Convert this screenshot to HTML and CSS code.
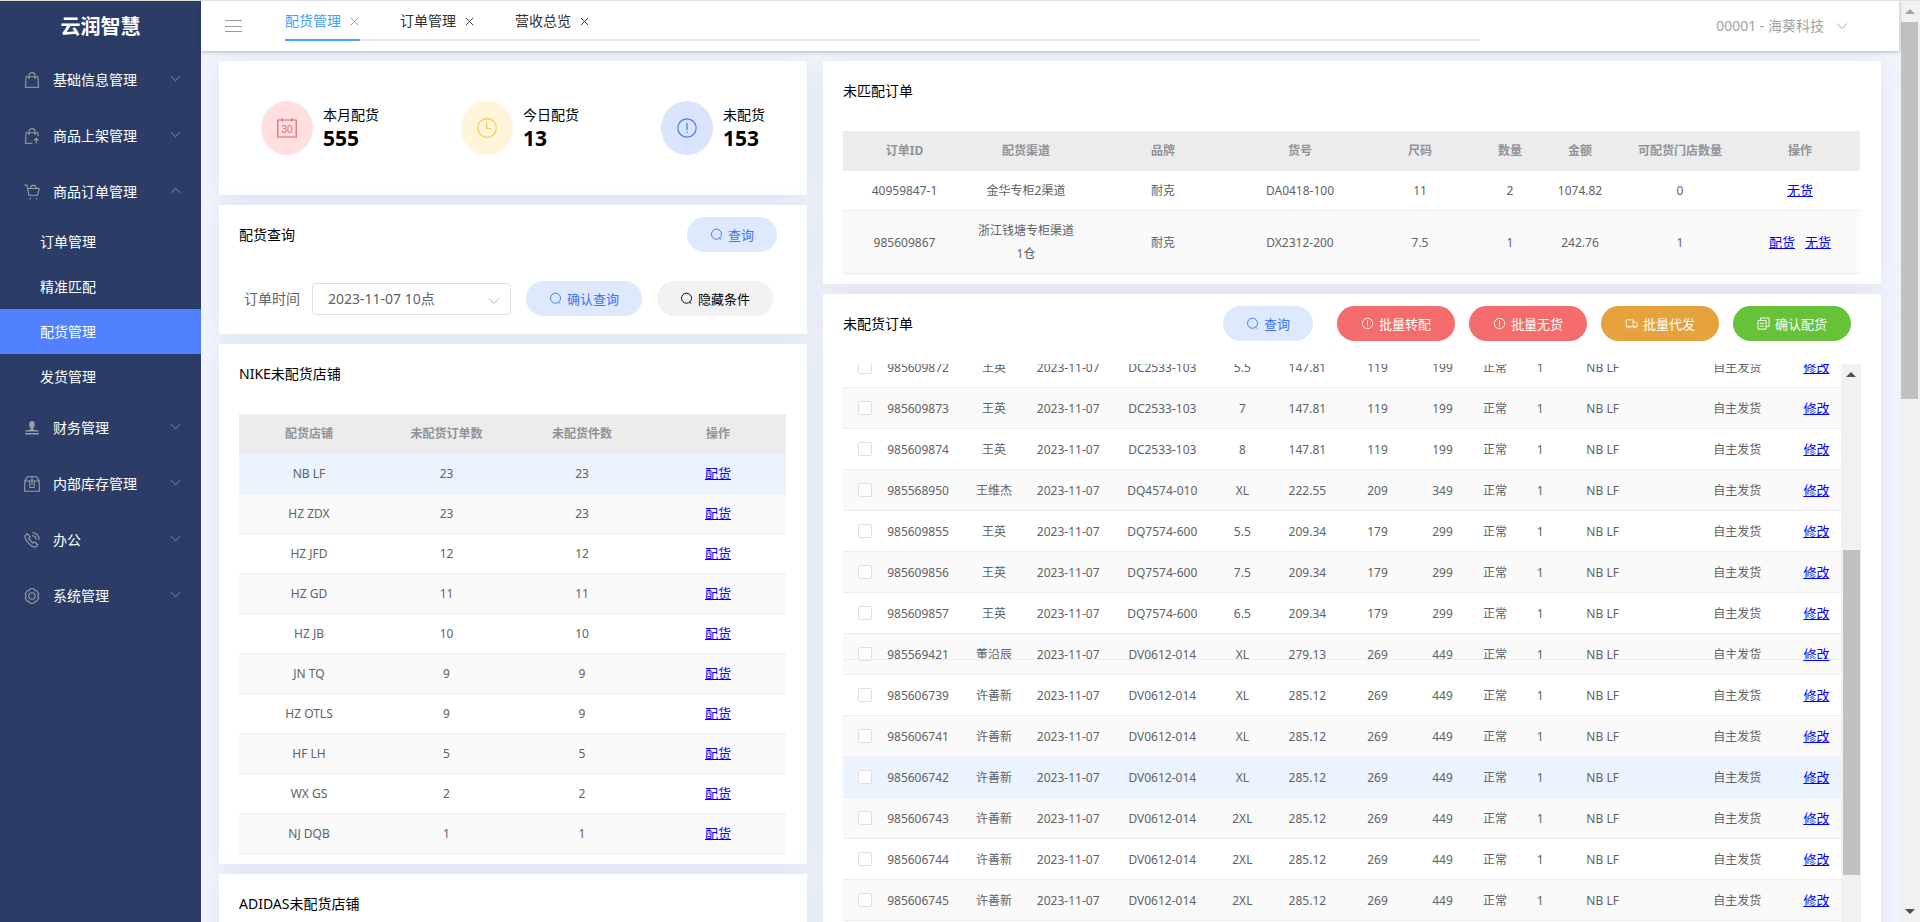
FILE: index.html
```html
<!DOCTYPE html>
<html lang="zh-CN">
<head>
<meta charset="utf-8">
<title>云润智慧 - 配货管理</title>
<link rel="stylesheet" href="styles.css">
</head>
<body>
<svg class="sprite" aria-hidden="true">
  <symbol id="i-down" viewBox="0 0 12 12"><path d="M1 3.5l5 5 5-5"/></symbol>
  <symbol id="i-up" viewBox="0 0 12 12"><path d="M1 8.5l5-5 5 5"/></symbol>
  <symbol id="i-close" viewBox="0 0 12 12"><path d="M2 2l8 8M10 2l-8 8"/></symbol>
  <symbol id="i-search" viewBox="0 0 14 14"><circle cx="7" cy="6.7" r="5.4"/><path d="M10 10.7l2.2 2"/></symbol>
  <symbol id="i-warn" viewBox="0 0 14 14"><circle cx="7" cy="7" r="5.6"/><path d="M7 3.6v4.8M7 9.4v1.2"/></symbol>
</svg>
<div class="app">
  <aside class="sidebar">
    <h1 class="brand">云润智慧</h1>
    <nav class="menu">
      <a class="menu-item" href="#base"><svg class="menu-icon" viewBox="0 0 16 16"><path d="M2.2 4.8h11.6l.8 10.5H1.4zM5 7V3.6a3 3 0 0 1 6 0V7"/></svg><span>基础信息管理</span><svg class="arrow"><use href="#i-down"/></svg></a>
      <a class="menu-item" href="#shelf"><svg class="menu-icon" viewBox="0 0 16 16"><path d="M8.5 15.3H1.4l.8-10.5h11.6l.3 3.4M5 7V3.6a3 3 0 0 1 6 0V7M12.2 15.5v-5M9.8 12.6l2.4-2.4 2.4 2.4"/></svg><span>商品上架管理</span><svg class="arrow"><use href="#i-down"/></svg></a>
      <a class="menu-item" href="#orders"><svg class="menu-icon" viewBox="0 0 16 16"><path d="M.3 1h2.5l2.1 10.3h8.6l1.7-6.8H3.6M6.2 4.3C6.6 2 8 1.2 9.5 1.4s2.6 1.3 2.8 2.9"/><path d="M5.5 14.6h1.4M11.7 14.6h1.4"/></svg><span>商品订单管理</span><svg class="arrow"><use href="#i-up"/></svg></a>
      <div class="submenu">
        <a class="sub-item" href="#order">订单管理</a>
        <a class="sub-item" href="#match">精准匹配</a>
        <a class="sub-item active" href="#alloc">配货管理</a>
        <a class="sub-item" href="#ship">发货管理</a>
      </div>
      <a class="menu-item" href="#finance"><svg class="menu-icon" viewBox="0 0 16 16"><path class="solid" d="M1 11.6c0-1 2.6-1.5 5.6-2 .3-.9 0-1.6-.7-2.6C4.400 4.500 5.300 1 8 1s3.600 3.500 2.100 6c-.7 1-1 1.700-.7 2.600 3 .5 5.600 1 5.600 2zM1 13h14v1.400H1z"/></svg><span>财务管理</span><svg class="arrow"><use href="#i-down"/></svg></a>
      <a class="menu-item" href="#stock"><svg class="menu-icon" viewBox="0 0 16 16"><path d="M.7 5L3.600.8h8.800L15.300 5v10.300H.7zM.7 5h14.600M5.800 5v6.500h4.400V5M8 .8v8"/></svg><span>内部库存管理</span><svg class="arrow"><use href="#i-down"/></svg></a>
      <a class="menu-item" href="#office"><svg class="menu-icon" viewBox="0 0 16 16"><path d="M3.400 1.700L1.200 3.500c-.8 2 .4 4.600 3.600 7.900s5.400 4.300 7.400 3.400l1.600-1.900-3-2.900-1.900 1.100-4.200-4.400 1.300-1.900zM8.300 3.600c2.200.2 3.700 1.700 4 4M8.300.7c3.900.2 6.600 2.900 6.900 7"/></svg><span>办公</span><svg class="arrow"><use href="#i-down"/></svg></a>
      <a class="menu-item" href="#system"><svg class="menu-icon" viewBox="0 0 16 16"><circle cx="8" cy="8" r="3.2"/><path d="M6 .8h4l.8 1.800 2 .1 2 3.300-1 2 1 2-2 3.300-2 .1-.8 1.800H6l-.8-1.800-2-.1-2-3.300 1-2-1-2 2-3.300 2-.1z"/></svg><span>系统管理</span><svg class="arrow"><use href="#i-down"/></svg></a>
    </nav>
  </aside>

  <div class="main">
    <header class="topbar">
      <button class="burger" type="button" aria-label="折叠菜单"><i></i><i></i><i></i></button>
      <nav class="tabs">
        <a class="tab current" href="#alloc">配货管理<svg><use href="#i-close"/></svg></a>
        <a class="tab" href="#order">订单管理<svg><use href="#i-close"/></svg></a>
        <a class="tab" href="#revenue">营收总览<svg><use href="#i-close"/></svg></a>
      </nav>
      <button class="user" type="button">00001 - 海葵科技<svg><use href="#i-down"/></svg></button>
    </header>

    <main class="content">
      <div class="column">
        <section class="card stats">
          <div class="stat"><div class="badge red"><svg viewBox="0 0 20 20"><path d="M.8 2h18.400v17H.8zM5.300.3v3.200M14.700.3v3.200"/><text x="10" y="14.500">30</text></svg></div><div><div class="stat-name">本月配货</div><div class="stat-num">555</div></div></div>
          <div class="stat"><div class="badge yellow"><svg viewBox="0 0 20 20"><circle cx="10" cy="10" r="9.300"/><path d="M9.700 4.500v6h4.600"/></svg></div><div><div class="stat-name">今日配货</div><div class="stat-num">13</div></div></div>
          <div class="stat"><div class="badge blue"><svg viewBox="0 0 20 20"><circle cx="10" cy="10" r="9.200"/><path d="M10 5v7M10 13.500v1.500"/></svg></div><div><div class="stat-name">未配货</div><div class="stat-num">153</div></div></div>
        </section>

        <section class="card query">
          <div class="card-head"><h2>配货查询</h2><button class="btn pale" type="button"><svg><use href="#i-search"/></svg>查询</button></div>
          <form class="filter">
            <label for="time">订单时间</label>
            <span class="select-box"><select id="time"><option>2023-11-07 10点</option></select><svg><use href="#i-down"/></svg></span>
            <button class="btn pale" type="button"><svg><use href="#i-search"/></svg>确认查询</button>
            <button class="btn gray" type="button"><svg><use href="#i-search"/></svg>隐藏条件</button>
          </form>
        </section>

        <section class="card">
          <div class="card-head"><h2>NIKE未配货店铺</h2></div>
          <table class="grid">
            <colgroup><col class="w140"><col class="w135"><col class="w136"><col class="w136"></colgroup>
            <thead><tr><th>配货店铺</th><th>未配货订单数</th><th>未配货件数</th><th>操作</th></tr></thead>
            <tbody>
              <tr class="hover"><td>NB LF</td><td>23</td><td>23</td><td><a href="#a">配货</a></td></tr>
              <tr><td>HZ ZDX</td><td>23</td><td>23</td><td><a href="#a">配货</a></td></tr>
              <tr><td>HZ JFD</td><td>12</td><td>12</td><td><a href="#a">配货</a></td></tr>
              <tr><td>HZ GD</td><td>11</td><td>11</td><td><a href="#a">配货</a></td></tr>
              <tr><td>HZ JB</td><td>10</td><td>10</td><td><a href="#a">配货</a></td></tr>
              <tr><td>JN TQ</td><td>9</td><td>9</td><td><a href="#a">配货</a></td></tr>
              <tr><td>HZ OTLS</td><td>9</td><td>9</td><td><a href="#a">配货</a></td></tr>
              <tr><td>HF LH</td><td>5</td><td>5</td><td><a href="#a">配货</a></td></tr>
              <tr><td>WX GS</td><td>2</td><td>2</td><td><a href="#a">配货</a></td></tr>
              <tr><td>NJ DQB</td><td>1</td><td>1</td><td><a href="#a">配货</a></td></tr>
            </tbody>
          </table>
        </section>

        <section class="card">
          <div class="card-head"><h2>ADIDAS未配货店铺</h2></div>
        </section>
      </div>

      <div class="column">
        <section class="card">
          <div class="card-head"><h2>未匹配订单</h2></div>
          <table class="grid">
            <colgroup><col class="w123"><col class="w120"><col class="w154"><col class="w120"><col class="w120"><col class="w60"><col class="w80"><col class="w120"><col class="w120"></colgroup>
            <thead><tr><th>订单ID</th><th>配货渠道</th><th>品牌</th><th>货号</th><th>尺码</th><th>数量</th><th>金额</th><th>可配货门店数量</th><th>操作</th></tr></thead>
            <tbody>
              <tr><td>40959847-1</td><td>金华专柜2渠道</td><td>耐克</td><td>DA0418-100</td><td>11</td><td>2</td><td>1074.82</td><td>0</td><td><a href="#n">无货</a></td></tr>
              <tr><td>985609867</td><td>浙江钱塘专柜渠道1仓</td><td>耐克</td><td>DX2312-200</td><td>7.5</td><td>1</td><td>242.76</td><td>1</td><td><span class="links"><a href="#a">配货</a><a href="#n">无货</a></span></td></tr>
            </tbody>
          </table>
        </section>

        <section class="card pending">
          <div class="card-head">
            <h2>未配货订单</h2>
            <div class="actions">
              <button class="btn pale" type="button"><svg><use href="#i-search"/></svg>查询</button>
              <button class="btn danger" type="button"><svg><use href="#i-warn"/></svg>批量转配</button>
              <button class="btn danger" type="button"><svg><use href="#i-warn"/></svg>批量无货</button>
              <button class="btn warning" type="button"><svg viewBox="0 0 14 14"><path d="M3.200 10.500H1.300V3h7.500v7.500H5.500M8.800 5.200h2.600l1.800 2.300v3h-1.300M8.800 10.500h.8"/><circle cx="4.400" cy="10.800" r="1.100"/><circle cx="10.700" cy="10.800" r="1.100"/></svg>批量代发</button>
              <button class="btn success" type="button"><svg viewBox="0 0 14 14"><path d="M1 3.800h8.800V13H1zM3.800 3.800V1H13v9.200H9.800M3 6.800h4.800M3 9.800h4.800"/></svg>确认配货</button>
            </div>
          </div>
          <div class="viewport">
            <div class="rows">
              <table class="grid tall">
                <colgroup><col class="w29"><col class="w92"><col class="w60"><col class="w88"><col class="w100"><col class="w60"><col class="w70"><col class="w70"><col class="w60"><col class="w45"><col class="w45"><col class="w80"><col class="w40"><col class="w109"><col class="w49"></colgroup>
                <tbody>
                  <tr><td><input type="checkbox" aria-label="985609872"></td><td>985609872</td><td>王英</td><td>2023-11-07</td><td>DC2533-103</td><td>5.5</td><td>147.81</td><td>119</td><td>199</td><td>正常</td><td>1</td><td>NB LF</td><td></td><td>自主发货</td><td><a href="#e">修改</a></td></tr>
                  <tr><td><input type="checkbox" aria-label="985609873"></td><td>985609873</td><td>王英</td><td>2023-11-07</td><td>DC2533-103</td><td>7</td><td>147.81</td><td>119</td><td>199</td><td>正常</td><td>1</td><td>NB LF</td><td></td><td>自主发货</td><td><a href="#e">修改</a></td></tr>
                  <tr><td><input type="checkbox" aria-label="985609874"></td><td>985609874</td><td>王英</td><td>2023-11-07</td><td>DC2533-103</td><td>8</td><td>147.81</td><td>119</td><td>199</td><td>正常</td><td>1</td><td>NB LF</td><td></td><td>自主发货</td><td><a href="#e">修改</a></td></tr>
                  <tr><td><input type="checkbox" aria-label="985568950"></td><td>985568950</td><td>王维杰</td><td>2023-11-07</td><td>DQ4574-010</td><td>XL</td><td>222.55</td><td>209</td><td>349</td><td>正常</td><td>1</td><td>NB LF</td><td></td><td>自主发货</td><td><a href="#e">修改</a></td></tr>
                  <tr><td><input type="checkbox" aria-label="985609855"></td><td>985609855</td><td>王英</td><td>2023-11-07</td><td>DQ7574-600</td><td>5.5</td><td>209.34</td><td>179</td><td>299</td><td>正常</td><td>1</td><td>NB LF</td><td></td><td>自主发货</td><td><a href="#e">修改</a></td></tr>
                  <tr><td><input type="checkbox" aria-label="985609856"></td><td>985609856</td><td>王英</td><td>2023-11-07</td><td>DQ7574-600</td><td>7.5</td><td>209.34</td><td>179</td><td>299</td><td>正常</td><td>1</td><td>NB LF</td><td></td><td>自主发货</td><td><a href="#e">修改</a></td></tr>
                  <tr><td><input type="checkbox" aria-label="985609857"></td><td>985609857</td><td>王英</td><td>2023-11-07</td><td>DQ7574-600</td><td>6.5</td><td>209.34</td><td>179</td><td>299</td><td>正常</td><td>1</td><td>NB LF</td><td></td><td>自主发货</td><td><a href="#e">修改</a></td></tr>
                  <tr><td><input type="checkbox" aria-label="985569421"></td><td>985569421</td><td>董沿辰</td><td>2023-11-07</td><td>DV0612-014</td><td>XL</td><td>279.13</td><td>269</td><td>449</td><td>正常</td><td>1</td><td>NB LF</td><td></td><td>自主发货</td><td><a href="#e">修改</a></td></tr>
                  <tr><td><input type="checkbox" aria-label="985606739"></td><td>985606739</td><td>许善新</td><td>2023-11-07</td><td>DV0612-014</td><td>XL</td><td>285.12</td><td>269</td><td>449</td><td>正常</td><td>1</td><td>NB LF</td><td></td><td>自主发货</td><td><a href="#e">修改</a></td></tr>
                  <tr><td><input type="checkbox" aria-label="985606741"></td><td>985606741</td><td>许善新</td><td>2023-11-07</td><td>DV0612-014</td><td>XL</td><td>285.12</td><td>269</td><td>449</td><td>正常</td><td>1</td><td>NB LF</td><td></td><td>自主发货</td><td><a href="#e">修改</a></td></tr>
                  <tr class="hover"><td><input type="checkbox" aria-label="985606742"></td><td>985606742</td><td>许善新</td><td>2023-11-07</td><td>DV0612-014</td><td>XL</td><td>285.12</td><td>269</td><td>449</td><td>正常</td><td>1</td><td>NB LF</td><td></td><td>自主发货</td><td><a href="#e">修改</a></td></tr>
                  <tr><td><input type="checkbox" aria-label="985606743"></td><td>985606743</td><td>许善新</td><td>2023-11-07</td><td>DV0612-014</td><td>2XL</td><td>285.12</td><td>269</td><td>449</td><td>正常</td><td>1</td><td>NB LF</td><td></td><td>自主发货</td><td><a href="#e">修改</a></td></tr>
                  <tr><td><input type="checkbox" aria-label="985606744"></td><td>985606744</td><td>许善新</td><td>2023-11-07</td><td>DV0612-014</td><td>2XL</td><td>285.12</td><td>269</td><td>449</td><td>正常</td><td>1</td><td>NB LF</td><td></td><td>自主发货</td><td><a href="#e">修改</a></td></tr>
                  <tr><td><input type="checkbox" aria-label="985606745"></td><td>985606745</td><td>许善新</td><td>2023-11-07</td><td>DV0612-014</td><td>2XL</td><td>285.12</td><td>269</td><td>449</td><td>正常</td><td>1</td><td>NB LF</td><td></td><td>自主发货</td><td><a href="#e">修改</a></td></tr>
                </tbody>
              </table>
              <div class="fixed-edge"></div>
            </div>
            <div class="scrollbar inner"><i class="tri up"></i><div class="track"><div class="thumb"></div></div><i class="tri down"></i></div>
          </div>
        </section>
      </div>
    </main>
  </div>
  <div class="scrollbar outer"><i class="tri up dim"></i><div class="track"><div class="thumb"></div></div><i class="tri down"></i></div>
</div>
</body>
</html>
```
FILE: styles.css
```css
* { box-sizing: border-box; }
body {
  margin: 0;
  font-family: "Noto Sans", "Noto Sans CJK SC", sans-serif;
  font-size: 14px;
  line-height: 20px;
  color: #000;
  background: #f2f5fd;
}
a { color: inherit; text-decoration: none; }
button { font: inherit; border: 0; background: none; padding: 0; }
svg { fill: none; stroke: currentColor; stroke-width: 1; flex: none; }
.sprite { position: absolute; width: 0; height: 0; }

.app { display: flex; height: 100vh; overflow: hidden; border-top: 1px solid #dfe1e1; }

/* sidebar */
.sidebar { flex: 0 0 201px; background: #2b3d67; color: #fff; }
.brand { margin: 0; padding: 11px 0; font-size: 20px; line-height: 29px; font-weight: 700; text-align: center; }
.menu-item { display: flex; align-items: center; height: 56px; padding: 0 20px 0 24px; }
.menu-item span { flex: 1; margin-left: 13px; }
.menu-icon { width: 16px; height: 16px; color: #999da6; stroke-width: 1.1; }
.menu-icon .solid { fill: currentColor; stroke: none; }
.arrow { width: 11px; height: 11px; margin-bottom: 4px; color: #8d97aa; }
.submenu { margin: -1px 0 1px; }
.sub-item { display: block; padding-left: 40px; line-height: 45px; }
.sub-item.active { background: #5181ff; }

/* top bar */
.main { flex: 1; min-width: 0; }
.topbar { position: relative; display: flex; height: 50px; padding: 0 51px 0 24px; background: #fff; box-shadow: 0 1px 4px rgba(0, 21, 41, .28); }
.burger { width: 17px; height: 12px; margin: 19px 43px 0 0; display: flex; flex-direction: column; justify-content: space-between; }
.burger i { width: 17px; height: 1px; background: #999; }
.tabs { flex: 1; display: flex; gap: 40px; height: 40px; margin-right: 236px; border-bottom: 2px solid #e4e7ed; color: #303133; }
.tab { display: flex; align-items: center; gap: 8px; height: 40px; padding-top: 2px; border-bottom: 2px solid transparent; }
.tab svg { width: 11px; height: 11px; }
.tab.current { color: #409eff; border-color: #409eff; }
.user { display: flex; align-items: center; gap: 12px; height: 50px; color: #a3a3a3; }
.user svg { width: 12px; height: 12px; }

/* cards */
.content { display: grid; grid-template-columns: 588fr 1058fr; gap: 16px; padding: 10px 18px; align-items: start; }
.column { display: flex; flex-direction: column; gap: 10px; min-width: 0; }
.card { background: #fff; padding: 12px 21px 10px 20px; box-shadow: 0 2px 24px rgba(120, 135, 165, .14); }
.card-head { display: flex; justify-content: space-between; align-items: center; height: 35px; margin-bottom: 23px; }
.card-head h2 { margin: 0; font-size: 14px; font-weight: 400; }

.stats { display: grid; grid-template-columns: 200fr 200fr 146fr; padding: 40px 0 40px 42px; }
.stat { display: flex; align-items: center; gap: 10px; }
.badge { width: 52px; height: 54px; border-radius: 50%; display: grid; place-items: center; }
.badge svg { width: 20px; height: 20px; stroke-width: 1.2; }
.badge text { font: 10px "Liberation Sans", sans-serif; fill: currentColor; stroke: none; text-anchor: middle; }
.red { background: #ffdfe0; color: #e5626a; }
.yellow { background: #fff5da; color: #fdc551; }
.blue { background: #dae4fe; color: #4c78ef; }
.stat-num { font-size: 21px; line-height: 26px; font-weight: 700; }

.btn { display: inline-flex; align-items: center; justify-content: center; gap: 5px; height: 35px; padding: 0 23px; border-radius: 18px; font-size: 13px; white-space: nowrap; }
.btn svg { width: 13px; height: 13px; }
.pale { background: #dee9fe; color: #3f73ff; }
.gray { background: #f2f2f2; color: #000; }
.danger { background: #f56c6c; }
.warning { background: #e6a23c; }
.success { background: #67c23a; }
.danger, .warning, .success { color: #fff; padding: 0 24px; }

.query { padding-bottom: 18px; }
.query .card-head { margin: 0 9px 29px 0; }
.filter { display: flex; align-items: center; gap: 15px; padding-left: 5px; }
.filter label { color: #606266; margin-right: -3px; }
.select-box { position: relative; flex: 0 1 199px; }
.select-box select { width: 100%; height: 32px; padding: 0 15px; border: 1px solid #dcdfe6; border-radius: 4px; background: #fff; color: #606266; font: inherit; appearance: none; }
.select-box svg { position: absolute; right: 11px; top: 12px; width: 12px; height: 12px; color: #b6bac3; }

/* tables */
.grid { width: 100%; table-layout: fixed; border-collapse: separate; border-spacing: 0; font-size: 12px; line-height: 23px; color: #606266; text-align: center; }
.grid th { height: 40px; padding: 0 0 2px; background: #ececec; color: #909399; font-weight: 700; }
.grid td { height: 40px; padding: 8px 10px; border-bottom: 1px solid #ebeef5; }
.grid tbody tr:nth-child(even) td { background: #fafafa; }
.grid tbody tr.hover td { background: #ebf3ff; }
.grid a { color: #00f; font-size: 13px; text-decoration: underline; }
.links { display: inline-flex; gap: 10px; }
.grid.tall td { height: 41px; padding: 0; white-space: nowrap; }
.grid input { appearance: none; display: block; width: 14px; height: 14px; margin: 0 0 0 auto; border: 1px solid #dcdfe6; border-radius: 2px; background: #fff; }
.w29 { width: 29px; } .w40 { width: 40px; } .w45 { width: 45px; } .w49 { width: 49px; }
.w60 { width: 60px; } .w70 { width: 70px; } .w80 { width: 80px; } .w88 { width: 88px; }
.w92 { width: 92px; } .w100 { width: 100px; } .w109 { width: 109px; } .w120 { width: 120px; }
.w123 { width: 123px; } .w135 { width: 135px; } .w136 { width: 136px; } .w140 { width: 140px; } .w154 { width: 154px; }

.pending .card-head { margin-right: 9px; }
.actions { display: flex; gap: 14px; }
.actions .pale { margin-right: 10px; }
.viewport { display: flex; overflow: hidden; margin-right: -1px; }
.rows { position: relative; flex: 1; min-width: 0; overflow: hidden; }
.rows .grid { margin-top: -17px; }
.fixed-edge { position: absolute; left: 0; right: 0; top: 295px; height: 1px; background: #ebeef5; }

/* scrollbars */
.scrollbar { display: flex; flex-direction: column; align-items: center; background: #f1f1f1; }
.scrollbar .track { flex: 1; align-self: stretch; }
.scrollbar .thumb { width: 17px; margin: 0 auto; background: #c1c1c1; }
.tri { flex: none; height: 21px; display: grid; place-items: center; }
.tri::before { content: ""; border: 5px solid transparent; }
.tri.up::before { border-top: 0; border-bottom-color: #505050; }
.tri.down::before { border-bottom: 0; border-top-color: #505050; }
.tri.dim::before { border-bottom-color: #a3a3a3; }
.inner { flex: 0 0 20px; }
.inner .track { padding: 165px 0 60px; }
.inner .thumb { height: 325px; }
.outer { flex: 0 0 21px; }
.outer .thumb { height: 377px; }
```
